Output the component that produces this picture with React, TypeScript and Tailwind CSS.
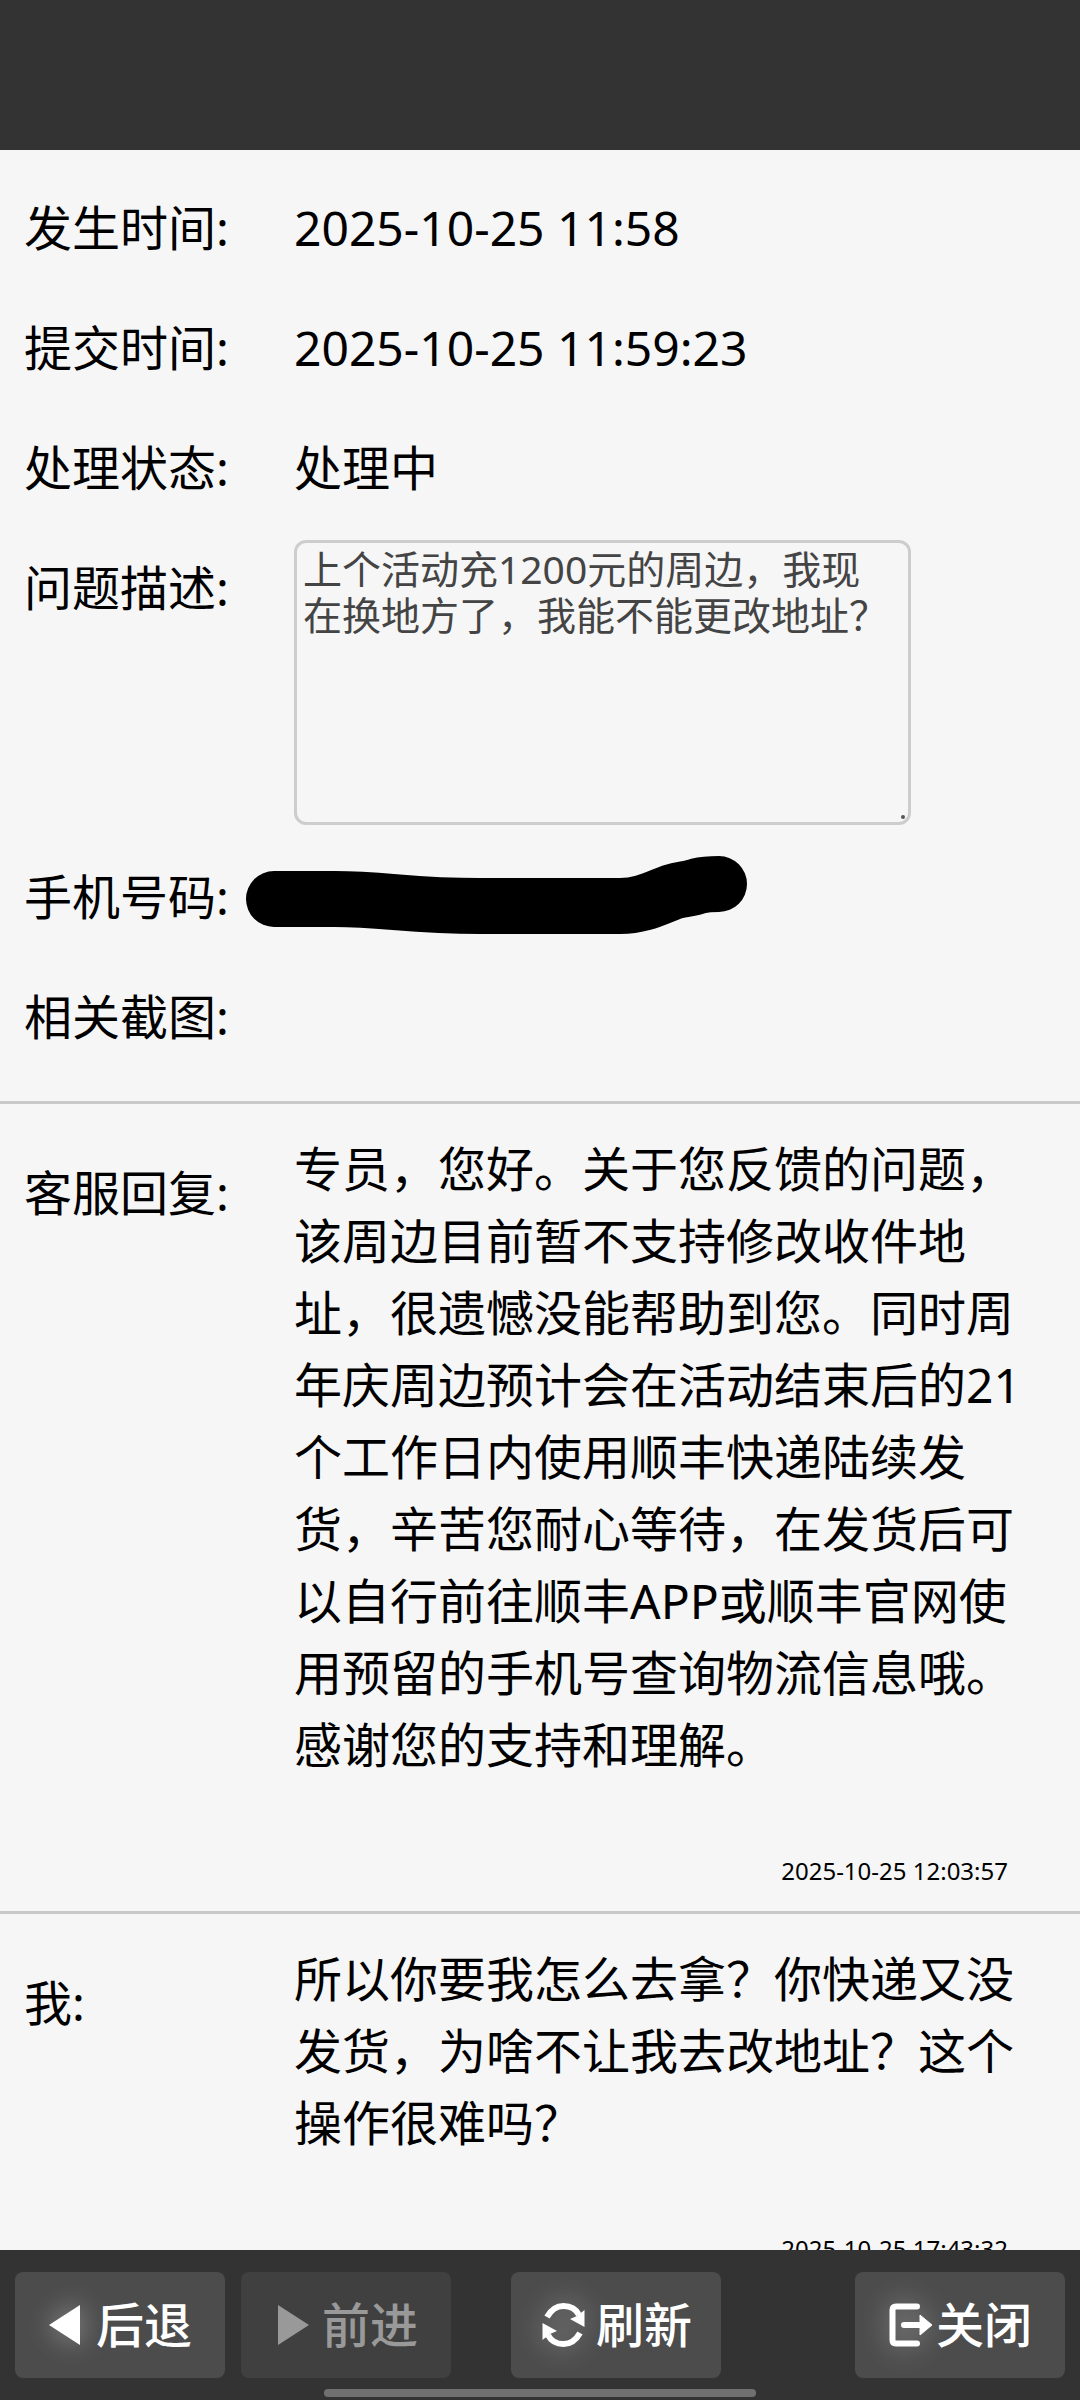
import React from "react";

interface FieldProps {
  label: string;
  htmlFor?: string;
  children?: React.ReactNode;
}

interface ReplyProps {
  author: string;
  text: string;
  time: string;
}

interface NavButtonProps {
  label: string;
  disabled?: boolean;
  className?: string;
  children: React.ReactNode;
}

const Field: React.FC<FieldProps> = ({ label, htmlFor, children }) => {
  return (
    <div className="flex leading-[120px]">
      {htmlFor ? (
        <label htmlFor={htmlFor} className="w-[270px] shrink-0">{label}</label>
      ) : (
        <span className="w-[270px] shrink-0">{label}</span>
      )}
      <div className="min-w-0 flex-1">{children}</div>
    </div>
  );
};

const Reply: React.FC<ReplyProps> = ({ author, text, time }) => {
  return (
    <section className="flex border-t-3 border-[#c9c9c9] pt-[29px] pb-[22px] pl-6 pr-12 leading-[72px]">
      <h2 className="w-[270px] shrink-0 pt-6">{author}</h2>
      <div className="min-w-0 flex-1">
        <p>{text}</p>
        <time className="block pt-18 pr-6 text-right text-2xl leading-9">{time}</time>
      </div>
    </section>
  );
};

const NavButton: React.FC<NavButtonProps> = ({ label, disabled, className = "", children }) => {
  return (
    <button
      type="button"
      disabled={disabled}
      className={`flex h-[106px] w-[210px] items-center justify-center rounded-lg bg-[#4c4c4c] font-medium text-white disabled:bg-[#404040] disabled:text-[#999999] ${className}`}
    >
      <svg
        viewBox="0 0 48 44"
        fill="currentColor"
        className={`h-11 w-12 shrink-0 overflow-visible ${disabled ? "" : "drop-shadow-[0_0_14px_rgba(255,255,255,0.45)]"}`}
        aria-hidden="true"
      >
        {children}
      </svg>
      {label}
    </button>
  );
};

const App: React.FC = () => {
  return (
    <div className="flex h-screen flex-col bg-[#f6f6f6] font-['Noto_Sans','Noto_Sans_CJK_SC',sans-serif] text-5xl text-black" lang="zh-CN">
      <header className="h-[150px] shrink-0 bg-[#333333]" />

      <main className="min-h-0 flex-1 overflow-y-auto [scrollbar-width:none]">
        <div className="px-6 pt-[18px] pb-6">
          <Field label="发生时间:">2025-10-25 11:58</Field>
          <Field label="提交时间:">2025-10-25 11:59:23</Field>
          <Field label="处理状态:">处理中</Field>
          <Field label="问题描述:" htmlFor="description">
            <div className="relative my-3 w-[617px] max-w-full">
              <textarea
                id="description"
                readOnly
                className="block h-[285px] w-full resize-none rounded-xl border-3 border-[#cdcdcd] bg-transparent pt-[3px] pr-3 pl-1.5 text-[39px] leading-[46px] text-[#444444] outline-none"
                defaultValue="上个活动充1200元的周边，我现在换地方了，我能不能更改地址？"
              />
              <span className="absolute right-1.5 bottom-1.5 size-1 rounded-full bg-[#555555]" />
            </div>
          </Field>
          <Field label="手机号码:">
            <div className="-ml-12 flex h-[120px] items-center">
              <svg viewBox="246 854 502 86" className="h-[86px] w-[502px]" fill="none" aria-hidden="true">
                <path
                  d="M274 899H335C385 899 410 906 480 906H620C642 906 656 898 672 892C682 889 690 889 698 886C706 884 711 884 719 884"
                  stroke="#000000"
                  strokeWidth="56"
                  strokeLinecap="round"
                  strokeLinejoin="round"
                />
              </svg>
            </div>
          </Field>
          <Field label="相关截图:" />
        </div>

        <Reply
          author="客服回复:"
          text="专员，您好。关于您反馈的问题，该周边目前暂不支持修改收件地址，很遗憾没能帮助到您。同时周年庆周边预计会在活动结束后的21个工作日内使用顺丰快递陆续发货，辛苦您耐心等待，在发货后可以自行前往顺丰APP或顺丰官网使用预留的手机号查询物流信息哦。感谢您的支持和理解。"
          time="2025-10-25 12:03:57"
        />
        <Reply
          author="我:"
          text="所以你要我怎么去拿？你快递又没发货，为啥不让我去改地址？这个操作很难吗？"
          time="2025-10-25 17:43:32"
        />
      </main>

      <footer className="flex h-[150px] shrink-0 flex-col items-center justify-between bg-[#333333] pt-[22px] pb-[3px]">
        <nav className="flex w-full px-[15px]">
          <NavButton label="后退">
            <path d="M1 22L32 2V42Z" />
          </NavButton>
          <NavButton label="前进" disabled className="ml-4">
            <path d="M4 2L35 22L4 42Z" />
          </NavButton>
          <NavButton label="刷新" className="ml-[60px] pl-2">
            <path d="M-1 14C3 7 9 3 15.500 3C22 3 28 6 31 12" fill="none" stroke="currentColor" strokeWidth="6" />
            <path d="M36.500 7V24L22 16L29 13Z" />
            <path d="M32 30C28 37 22 41 15.500 41C9 41 3 38 0 32" fill="none" stroke="currentColor" strokeWidth="6" />
            <path d="M-5.500 37V20L9 28L2 31Z" />
          </NavButton>
          <NavButton label="关闭" className="ml-auto">
            <path d="M29 3.500H8Q4.500 3.500 4.500 7V37Q4.500 40.500 8 40.500H29" fill="none" stroke="currentColor" strokeWidth="6" strokeLinecap="round" />
            <path d="M16 22H34" stroke="currentColor" strokeWidth="6" strokeLinecap="round" />
            <path d="M32 12L44 22L32 32Z" strokeWidth="1" stroke="currentColor" strokeLinejoin="round" />
          </NavButton>
        </nav>
        <div className="h-2 w-2/5 rounded-full bg-[#707070]" />
      </footer>
    </div>
  );
};

export default App;
